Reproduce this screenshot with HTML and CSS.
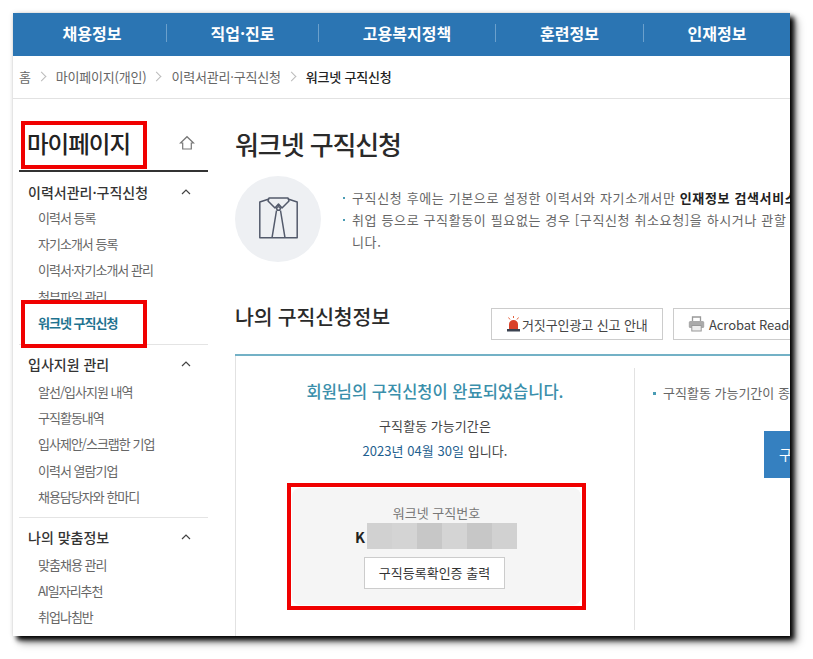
FILE: index.html
```html
<!DOCTYPE html>
<html lang="ko">
<head>
<meta charset="utf-8">
<title>워크넷 구직신청</title>
<link rel="stylesheet" href="styles.css">
</head>
<body>
<div class="shot">
  <nav class="gnb">
    <a>채용정보</a><a>직업·진로</a><a>고용복지정책</a><a>훈련정보</a><a>인재정보</a>
  </nav>
  <div class="crumbs">
    <span>홈</span><i class="chev"></i><span>마이페이지(개인)</span><i class="chev"></i><span>이력서관리·구직신청</span><i class="chev"></i><b>워크넷 구직신청</b>
  </div>
  <div class="body">
    <aside class="side">
      <div class="side-title">
        <h2>마이페이지</h2>
        <svg class="home" width="16" height="16" viewBox="0 0 16 16"><path d="M1.5 8 8 1.7 14.500 8H12.300V14H3.700V8Z" fill="none" stroke="#777" stroke-width="1.200"/></svg>
      </div>
      <section class="group">
        <h3>이력서관리·구직신청<svg class="caret" width="10" height="6" viewBox="0 0 10 6"><path d="M1 5 5 1 9 5" fill="none" stroke="#444" stroke-width="1.200"/></svg></h3>
        <ul>
          <li>이력서 등록</li><li>자기소개서 등록</li><li>이력서·자기소개서 관리</li><li>첨부파일 관리</li><li class="on">워크넷 구직신청</li>
        </ul>
      </section>
      <section class="group">
        <h3>입사지원 관리<svg class="caret" width="10" height="6" viewBox="0 0 10 6"><path d="M1 5 5 1 9 5" fill="none" stroke="#444" stroke-width="1.200"/></svg></h3>
        <ul>
          <li>알선/입사지원 내역</li><li>구직활동내역</li><li>입사제안/스크랩한 기업</li><li>이력서 열람기업</li><li>채용담당자와 한마디</li>
        </ul>
      </section>
      <section class="group">
        <h3>나의 맞춤정보<svg class="caret" width="10" height="6" viewBox="0 0 10 6"><path d="M1 5 5 1 9 5" fill="none" stroke="#444" stroke-width="1.200"/></svg></h3>
        <ul>
          <li>맞춤채용 관리</li><li>AI일자리추천</li><li>취업나침반</li>
        </ul>
      </section>
    </aside>
    <main class="main">
      <h1>워크넷 구직신청</h1>
      <div class="intro">
        <div class="circle">
          <svg class="shirt" width="39" height="42" viewBox="0 0 39 42" fill="none" stroke="#535a6b" stroke-width="1.500" stroke-linejoin="round">
            <path d="M10 2 .8 5V40.800H38.200V5L29 2"/>
            <path d="M10 1H29L30 4 23 11 19.500 7 16 11 9 4Z"/>
            <circle cx="19.500" cy="11.500" r="1.800"/>
            <path d="M17.500 13.500 13 40.800M21.500 13.500 26 40.800"/>
          </svg>
        </div>
        <ul class="notes">
          <li>구직신청 후에는 기본으로 설정한 이력서와 자기소개서만 <b>인재정보 검색서비스</b></li>
          <li>취업 등으로 구직활동이 필요없는 경우 [구직신청 취소요청]을 하시거나 관할<br>니다.</li>
        </ul>
      </div>
      <div class="sec-head">
        <h2>나의 구직신청정보</h2>
        <a class="btn btn-alert">
          <svg width="15" height="16" viewBox="0 0 15 16"><path d="M7.500 0V2M2.500 1.500 4 3.500M12.500 1.500 11 3.500" stroke="#e2603c" stroke-width="1"/><path d="M3 13V8.500C3 5.500 5 4 7.500 4S12 5.500 12 8.500V13Z" fill="#d8412a"/><path d="M1 13H14V15.500H1Z" fill="#3b4250"/></svg>
          거짓구인광고 신고 안내
        </a>
        <a class="btn btn-print">
          <svg width="17" height="16" viewBox="0 0 17 16"><path d="M4.500 5V1H12.500V5" fill="none" stroke="#999" stroke-width="1.300"/><rect x=".8" y="5" width="15.400" height="7" rx="1.500" fill="#aaa"/><rect x="3.800" y="9.500" width="9.400" height="5.500" fill="#eee" stroke="#999"/></svg>
          Acrobat Reader
        </a>
      </div>
      <div class="panel">
        <div class="done">
          <p class="done-title">회원님의 구직신청이 완료되었습니다.</p>
          <p class="period">구직활동 가능기간은</p>
          <p class="period"><em>2023년 04월 30일</em> 입니다.</p>
          <div class="numbox">
            <p class="num-label">워크넷 구직번호</p>
            <div class="num"><b>K</b><span class="blur"><i></i><i class="l"></i><i class="d"></i><i class="l"></i><i class="d"></i><i></i></span></div>
            <a class="print">구직등록확인증 출력</a>
          </div>
        </div>
        <div class="side-note">
          <p class="note">구직활동 가능기간이 종료</p>
          <a class="renew">구직</a>
        </div>
      </div>
    </main>
  </div>
  <div class="mark mark-title"></div>
  <div class="mark mark-menu"></div>
  <div class="mark mark-num"></div>
</div>
</body>
</html>
```
FILE: styles.css
```css
* { box-sizing: border-box; }
html, body { margin: 0; padding: 0; background: #fff; }
body {
  padding: 13px;
  height: 659px;
  overflow: hidden;
  font-family: "Noto Sans CJK KR", "Noto Sans", sans-serif;
  color: #333;
}
h1, h2, h3, p, ul { margin: 0; padding: 0; font-weight: 400; }
ul { list-style: none; }
em { font-style: normal; }

.shot {
  position: relative;
  width: 777px;
  height: 623px;
  background: #fff;
  box-shadow: 0 0 5px rgba(0,0,0,.12), 4px 4px 5px #000, 7px 7px 8px rgba(0,0,0,.35);
}

.gnb {
  display: grid;
  grid-template-columns: 154px 152px 177px 148px 146px;
  height: 43px;
  padding-bottom: 3px;
  background: #2b75b3;
  align-items: center;
}
.gnb a {
  color: #fff;
  font-size: 16px;
  font-weight: 700;
  line-height: 18px;
  text-align: center;
  border-right: 1px solid #6ba0cc;
}
.gnb a:first-child { padding-left: 5px; }
.gnb a:last-child { border-right: 0; }

.crumbs {
  display: flex;
  align-items: center;
  height: 43px;
  padding: 0 0 2px 6px;
  border-bottom: 1px solid #e2e2e2;
  font-size: 13px;
  letter-spacing: -.2px;
  color: #666;
  overflow: hidden;
}
.crumbs b { color: #222; font-weight: 500; }
.chev {
  width: 7px;
  height: 7px;
  margin: 0 11px 0 7px;
  border-top: 1px solid #bbb;
  border-right: 1px solid #bbb;
  transform: rotate(45deg);
}

.body {
  display: flex;
  height: 537px;
  overflow: hidden;
}
.side {
  flex: 0 0 189px;
  margin-left: 6px;
}
.side-title {
  display: flex;
  align-items: center;
  justify-content: space-between;
  height: 73px;
  padding: 17px 14px 0 8px;
  border-bottom: 2px solid #333;
}
.side-title h2 {
  font-size: 23.500px;
  font-weight: 500;
  letter-spacing: -1px;
  color: #222;
}
.home { margin: 0 -1px 0 0; }
.group {
  padding: 9px 0 7px;
  border-bottom: 1px solid #e4e4e4;
}
.group:first-of-type { padding: 10px 0 8px; }
.group:last-child { border-bottom: 0; }
.group h3 {
  display: flex;
  align-items: center;
  justify-content: space-between;
  height: 20px;
  padding: 0 17px 0 9px;
  font-size: 14px;
  font-weight: 500;
  color: #333;
}
.group ul { padding: 5px 0 0 19px; }
.group:first-of-type ul { padding-top: 3px; }
.group li {
  height: 26.200px;
  line-height: 26px;
  font-size: 13px;
  letter-spacing: -1px;
  color: #666;
}
.group li.on {
  color: #1f7390;
  font-weight: 700;
}

.main {
  flex: 1;
  min-width: 0;
  margin-left: 27px;
  white-space: nowrap;
}
.main h1 {
  font-size: 26px;
  font-weight: 500;
  letter-spacing: -1.100px;
  line-height: 36px;
  padding-top: 27px;
  height: 77px;
  color: #2a2a2a;
}
.intro {
  display: flex;
  gap: 22px;
  height: 87px;
}
.circle {
  flex: 0 0 86px;
  height: 86px;
  border-radius: 50%;
  background: #eef0f3;
  display: flex;
  align-items: center;
  justify-content: center;
}
.shirt { margin-bottom: 3px; }
.notes {
  padding-top: 11px;
  font-size: 13px;
  line-height: 22px;
  letter-spacing: .63px;
  color: #666;
}
.notes li { position: relative; padding-left: 9px; }
.notes li::before {
  content: "";
  position: absolute;
  left: 0;
  top: 10px;
  width: 2px;
  height: 2px;
  background: #4a9cb4;
}
.notes b { color: #222; font-weight: 700; }

.sec-head {
  display: flex;
  height: 93px;
  padding-top: 45px;
  border-bottom: 2px solid #73b1c6;
}
.sec-head h2 {
  flex: 0 0 256px;
  font-size: 20.500px;
  font-weight: 500;
  letter-spacing: -.2px;
  line-height: 24px;
  margin-top: -4px;
  color: #2a2a2a;
}
.btn {
  flex: none;
  display: flex;
  align-items: center;
  gap: 1px;
  height: 32px;
  padding: 0 14px;
  border: 1px solid #ccc;
  font-size: 13px;
  letter-spacing: -.1px;
  color: #444;
}
.btn-alert { width: 172px; }
.btn-print { margin-left: 10px; gap: 4px; }

.panel {
  display: flex;
  height: 280px;
  border-left: 1px solid #e2e2e2;
}
.done {
  flex: 0 0 398px;
  height: 262px;
  margin-top: 12px;
  padding: 11px 0 0 56px;
  border-right: 1px solid #e2e2e2;
  text-align: center;
}
.done-title {
  width: 398px;
  margin: 0 0 10px -56px;
  font-size: 16.500px;
  font-weight: 500;
  line-height: 24px;
  color: #3a8fab;
}
.period {
  width: 398px;
  margin-left: -56px;
  font-size: 13px;
  line-height: 25px;
  letter-spacing: .05px;
  color: #444;
}
.period em { color: #1f5f8f; }
.numbox {
  width: 289px;
  height: 117px;
  margin: 25px 0 0;
  padding-top: 16px;
  background: #f5f5f5;
  border-radius: 8px;
  text-align: center;
}
.num-label {
  font-size: 13px;
  line-height: 18px;
  color: #777;
}
.num {
  display: flex;
  align-items: center;
  height: 26px;
  margin: 1px 0 0 63px;
  font-size: 14.500px;
  color: #222;
}
.num b { font-weight: 700; width: 12px; text-align: left; }
.blur { display: flex; width: 150px; height: 26px; }
.blur i { flex: 1; background: #d1d1d1; }
.blur i.l { background: #d4d4d4; }
.blur i.d { background: #c7c7c7; }
.print {
  display: block;
  width: 141px;
  height: 32px;
  margin: 8px 0 0 72px;
  line-height: 30px;
  background: #fff;
  border: 1px solid #ccc;
  font-size: 13px;
  color: #333;
}
.side-note {
  flex: 1;
  min-width: 0;
  padding: 25px 0 0 18px;
}
.note {
  position: relative;
  padding-left: 10px;
  font-size: 13px;
  line-height: 24px;
  color: #666;
}
.note::before {
  content: "";
  position: absolute;
  left: 0;
  top: 11px;
  width: 3px;
  height: 3px;
  background: #4a9cb4;
}
.renew {
  display: block;
  width: 160px;
  height: 47px;
  margin: 26px 0 0 111px;
  padding-left: 15px;
  line-height: 47px;
  background: #3580c0;
  color: #fff;
  font-size: 14px;
}

.mark {
  position: absolute;
  border: 4px solid #f00000;
  pointer-events: none;
}
.mark-title { left: 8px; top: 108px; width: 126px; height: 48px; }
.mark-menu { left: 8px; top: 287px; width: 126px; height: 48px; }
.mark-num { left: 274px; top: 470px; width: 299px; height: 127px; }
```
